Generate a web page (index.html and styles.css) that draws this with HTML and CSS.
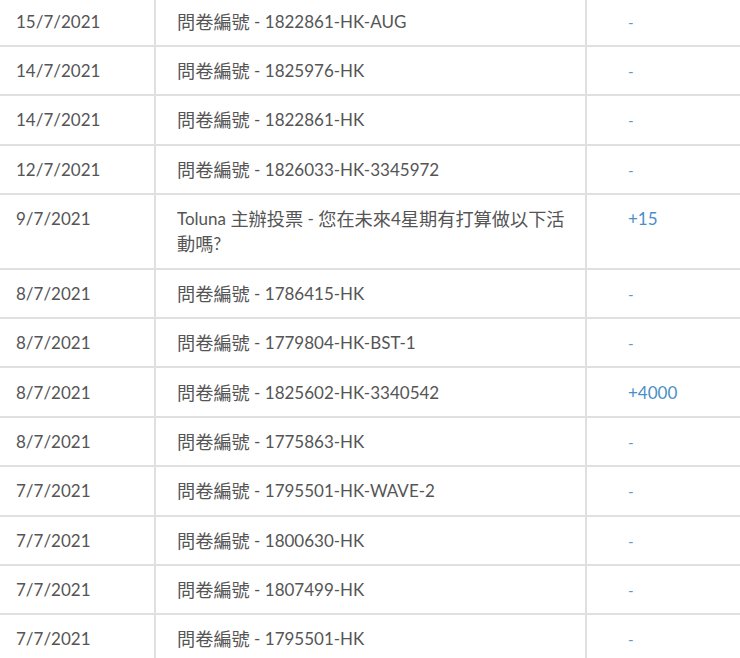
FILE: index.html
```html
<!DOCTYPE html>
<html lang="zh-Hant">
<head>
<meta charset="utf-8">
<title>積分記錄</title>
<link rel="stylesheet" href="styles.css">
</head>
<body>
<div class="history">
  <div class="row"><div class="cell date">15/7/2021</div><div class="cell desc"><span class="zh">問卷編號</span> - 1822861-HK-AUG</div><div class="cell pts"><span class="dash">-</span></div></div>
  <div class="row"><div class="cell date">14/7/2021</div><div class="cell desc"><span class="zh">問卷編號</span> - 1825976-HK</div><div class="cell pts"><span class="dash">-</span></div></div>
  <div class="row"><div class="cell date">14/7/2021</div><div class="cell desc"><span class="zh">問卷編號</span> - 1822861-HK</div><div class="cell pts"><span class="dash">-</span></div></div>
  <div class="row"><div class="cell date">12/7/2021</div><div class="cell desc"><span class="zh">問卷編號</span> - 1826033-HK-3345972</div><div class="cell pts"><span class="dash">-</span></div></div>
  <div class="row"><div class="cell date">9/7/2021</div><div class="cell desc">Toluna <span class="zh">主辦投票</span> - <span class="zh">您在未來</span>4<span class="zh">星期有打算做以下活動嗎</span>?</div><div class="cell pts">+15</div></div>
  <div class="row"><div class="cell date">8/7/2021</div><div class="cell desc"><span class="zh">問卷編號</span> - 1786415-HK</div><div class="cell pts"><span class="dash">-</span></div></div>
  <div class="row"><div class="cell date">8/7/2021</div><div class="cell desc"><span class="zh">問卷編號</span> - 1779804-HK-BST-1</div><div class="cell pts"><span class="dash">-</span></div></div>
  <div class="row"><div class="cell date">8/7/2021</div><div class="cell desc"><span class="zh">問卷編號</span> - 1825602-HK-3340542</div><div class="cell pts">+4000</div></div>
  <div class="row"><div class="cell date">8/7/2021</div><div class="cell desc"><span class="zh">問卷編號</span> - 1775863-HK</div><div class="cell pts"><span class="dash">-</span></div></div>
  <div class="row"><div class="cell date">7/7/2021</div><div class="cell desc"><span class="zh">問卷編號</span> - 1795501-HK-WAVE-2</div><div class="cell pts"><span class="dash">-</span></div></div>
  <div class="row"><div class="cell date">7/7/2021</div><div class="cell desc"><span class="zh">問卷編號</span> - 1800630-HK</div><div class="cell pts"><span class="dash">-</span></div></div>
  <div class="row"><div class="cell date">7/7/2021</div><div class="cell desc"><span class="zh">問卷編號</span> - 1807499-HK</div><div class="cell pts"><span class="dash">-</span></div></div>
  <div class="row"><div class="cell date">7/7/2021</div><div class="cell desc"><span class="zh">問卷編號</span> - 1795501-HK</div><div class="cell pts"><span class="dash">-</span></div></div>
</div>
</body>
</html>
```

FILE: styles.css
```css
html, body {
  margin: 0;
  padding: 0;
  background: #fff;
}
body {
  width: 740px;
  height: 658px;
  overflow: hidden;
  font-family: "Lato", "Noto Sans CJK TC", sans-serif;
  color: #555;
  font-size: 17px;
}
.history {
  margin-top: -2.6px;
  display: flex;
  flex-direction: column;
}
.row {
  display: grid;
  grid-template-columns: 154px 431px 155px;
  border-bottom: 2px solid #e0e0e0;
}
.cell {
  line-height: 25.2px;
  padding: 11.2px 8px 11px 22px;
}
.date {
  padding-left: 16px;
}
.desc, .pts {
  border-left: 2px solid #e0e0e0;
}
.desc {
  padding-left: 21px;
}
.pts {
  padding-left: 41px;
  color: #4a8fc6;
}
.zh {
  font-family: "Noto Sans CJK TC", sans-serif;
  font-size: 18.2px;
  line-height: 18px;
  vertical-align: -1px;
}
.dash {
  font-size: 15px;
  line-height: 15px;
  color: #5b9bd0;
}
```
